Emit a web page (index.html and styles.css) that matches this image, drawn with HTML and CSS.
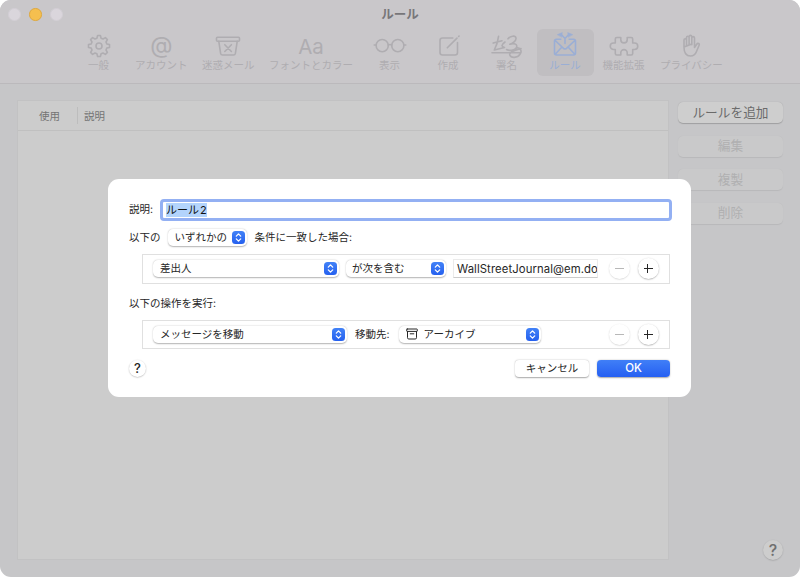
FILE: index.html
```html
<!DOCTYPE html>
<html lang="ja">
<head>
    <meta charset="UTF-8">
    <meta name="viewport" content="width=device-width, initial-scale=1.0">
    <title>ルール</title>
    <link rel="stylesheet" href="styles.css">
</head>
<body>
    <!-- 矢印アイコン (ポップアップ共通) -->
    <svg class="defs">
        <symbol id="arrows" viewBox="0 0 13 13">
            <path d="M4.3 5.1 6.5 2.9 8.7 5.1M4.3 7.9 6.5 10.1 8.7 7.9"/>
        </symbol>
    </svg>

    <div class="window">
        <div class="toolbar">
            <div class="titlebar">
                <div class="lights">
                    <span class="light"></span>
                    <span class="light yellow"></span>
                    <span class="light"></span>
                </div>
                <div class="title">ルール</div>
            </div>
            <div class="tabs">
                <div class="tab">
                    <svg width="24" height="24" viewBox="0 0 24 24"><path d="M10.6 1.5h2.800l.7 2.700 1.900.8 2.400-1.400 2 2-1.400 2.400.8 1.900 2.700.7v2.800l-2.700.7-.8 1.900 1.400 2.400-2 2-2.400-1.400-1.900.8-.7 2.700h-2.800l-.7-2.700-1.900-.8-2.400 1.400-2-2 1.400-2.400-.8-1.900-2.700-.7v-2.800l2.700-.7.8-1.900-1.400-2.400 2-2L8 5l1.900-.8z"/><circle cx="12" cy="12" r="3"/></svg>
                    <span>一般</span>
                </div>
                <div class="tab">
                    <div class="glyph at">@</div>
                    <span>アカウント</span>
                </div>
                <div class="tab">
                    <svg width="26" height="24" viewBox="0 0 26 24"><rect x="1.5" y="3.2" width="23" height="4" rx="1"/><path d="M3.800 7.400 5.600 19.400Q5.900 21 7.500 21h11Q20.100 21 20.400 19.400L22.200 7.400M9.800 10.700l6.600 6.800M16.400 10.700l-6.600 6.800"/></svg>
                    <span>迷惑メール</span>
                </div>
                <div class="tab">
                    <div class="glyph aa">Aa</div>
                    <span>フォントとカラー</span>
                </div>
                <div class="tab">
                    <svg width="34" height="24" viewBox="0 0 34 24"><circle cx="9.2" cy="11.600" r="6.100"/><circle cx="24.800" cy="11.600" r="6.100"/><path d="M15.200 11Q17 9.900 18.800 11M3.200 11H1.200M30.800 11h2"/></svg>
                    <span>表示</span>
                </div>
                <div class="tab">
                    <svg width="24" height="24" viewBox="0 0 24 24"><path d="M16.800 4H6.500Q4 4 4 6.500V18.500Q4 21 6.500 21h12.500q2.500 0 2.500-2.500V8.500M11.300 13.800 21 4.100M22.700 2.400l.4-.4"/></svg>
                    <span>作成</span>
                </div>
                <div class="tab">
                    <svg width="34" height="24" viewBox="0 0 34 24"><path d="M8.600 2.200C8 7 6.400 12 4.300 16M3.200 9.100 12 6.700M4.300 16 14.500 13.500C11 12.500 11 11 15 8M18 4.800C20 2 25.500.8 26 4.200 26.300 7 22 9.700 19.800 10.300 24 8.600 28.400 10.300 26.200 14 24.500 17 19 16.800 16.500 15.500M26.200 14C30 13 32.500 17 30 20.300 27.500 24 21 24.500 19.800 21 19 18 23.500 16.500 31 14.500M2 18.800H31"/></svg>
                    <span>署名</span>
                </div>
                <div class="tab active">
                    <svg width="26" height="24" viewBox="0 0 26 24"><path d="M8.800 5.300H4.500Q2.500 5.300 2.500 7.300V19Q2.500 21 4.500 21h17Q23.500 21 23.500 19V7.300Q23.500 5.300 21.500 5.300H17.200M3.200 6.500 11.500 14.300Q13 15.600 14.500 14.300L22.800 6.500M3.200 20.300 9.700 13.200M22.800 20.300 16.300 13.200M13 9.500V4.500L9.500.8M13 4.500 16.500.8"/><path class="solid" d="M5.500.5 10.300-1.500 9.700 3zM20.500.5 15.700-1.500 16.300 3z"/></svg>
                    <span>ルール</span>
                </div>
                <div class="tab">
                    <svg width="32" height="24" viewBox="0 0 32 24"><path d="M7.300 9V5Q7.300 3.500 8.800 3.500h4v2.200a3.200 3.200 0 1 0 6.400 0V3.500h4Q24.700 3.500 24.700 5V9h1.800a3 3 0 1 1 0 6.500h-1.800V19.500Q24.700 21 23.200 21h-4v-2.200a3.200 3.200 0 1 0-6.400 0V21h-4Q7.300 21 7.300 19.500V15.500H5.500a3 3 0 1 1 0-6.500z"/></svg>
                    <span>機能拡張</span>
                </div>
                <div class="tab">
                    <svg width="22" height="24" viewBox="0 0 22 24"><path d="M4 13V6Q4 4.700 5.200 4.700T6.500 6V11.500M6.500 10.500V3.600Q6.500 2.300 7.800 2.300T9.100 3.600V10.800M9.100 10V2.700Q9.100 1.400 10.400 1.400T11.800 2.700V10.800M11.800 10V3.900Q11.800 2.600 13.100 2.600T14.500 3.900V13.500L16.700 10.200Q17.500 9 18.600 9.500T19.100 11.200L16.500 17.500Q14.800 22 10.500 22 4 22 4 13z"/></svg>
                    <span>プライバシー</span>
                </div>
            </div>
        </div>

        <div class="content">
            <div class="list">
                <div class="list-head">
                    <div class="col use">使用</div>
                    <div class="col">説明</div>
                </div>
            </div>
            <div class="side">
                <button class="side-btn">ルールを追加</button>
                <button class="side-btn off">編集</button>
                <button class="side-btn off">複製</button>
                <button class="side-btn off">削除</button>
                <button class="help big">?</button>
            </div>
        </div>
    </div>

    <div class="dialog">
        <div class="row name-row">
            <label>説明:</label>
            <div class="name-input"><span class="selected">ルール 2</span></div>
        </div>
        <div class="row match-row">
            <span>以下の</span>
            <div class="popup any"><span>いずれかの</span><svg class="arrows"><use href="#arrows"/></svg></div>
            <span>条件に一致した場合:</span>
        </div>
        <div class="group">
            <div class="popup from"><span>差出人</span><svg class="arrows"><use href="#arrows"/></svg></div>
            <div class="popup contains"><span>が次を含む</span><svg class="arrows"><use href="#arrows"/></svg></div>
            <div class="value">WallStreetJournal@em.do</div>
            <div class="round-btns">
                <button class="round minus"></button>
                <button class="round plus"></button>
            </div>
        </div>
        <div class="row action-row">以下の操作を実行:</div>
        <div class="group">
            <div class="popup move"><span>メッセージを移動</span><svg class="arrows"><use href="#arrows"/></svg></div>
            <span class="dest">移動先:</span>
            <div class="popup archive">
                <svg class="box" width="12" height="12" viewBox="0 0 12 12"><rect x=".7" y="1" width="10.600" height="2.400" rx=".5"/><path d="M1.500 3.500V9.700Q1.500 11 2.800 11H9.200Q10.500 11 10.500 9.700V3.500M4.200 5.800H7.800"/></svg>
                <span>アーカイブ</span><svg class="arrows"><use href="#arrows"/></svg>
            </div>
            <div class="round-btns">
                <button class="round minus"></button>
                <button class="round plus"></button>
            </div>
        </div>
        <div class="footer">
            <button class="help">?</button>
            <button class="btn cancel">キャンセル</button>
            <button class="btn ok">OK</button>
        </div>
    </div>
</body>
</html>
```
FILE: styles.css
```css
* {
    padding: 0;
    margin: 0;
    box-sizing: border-box;
}
body {
    width: 800px;
    height: 577px;
    overflow: hidden;
    background-color: #fff;
    font-family: Inter, "Noto Sans CJK JP", sans-serif;
    font-size: 10.5px;
    line-height: 16px;
    color: #262626;
    white-space: nowrap;
}
button {
    font-family: inherit;
    color: inherit;
    border: none;
}
svg {
    fill: none;
    stroke: currentColor;
    stroke-linecap: round;
    stroke-linejoin: round;
    flex: none;
}
.defs {
    display: none;
}

/* 後ろのウィンドウ */
.window {
    width: 800px;
    height: 577px;
    border-radius: 11px;
    background-color: #c6c6c8;
    overflow: hidden;
    display: flex;
    flex-direction: column;
}
.toolbar {
    height: 84px;
    background-color: #c9c7ca;
    border-bottom: 1px solid #bbb9bc;
}
.titlebar {
    height: 29px;
    display: grid;
    grid-template-columns: 100px 1fr 100px;
    align-items: center;
}
.lights {
    display: flex;
    gap: 8.5px;
    padding-left: 8px;
}
.light {
    width: 12.5px;
    height: 12.5px;
    border-radius: 50%;
    background-color: #dad6dc;
    border: 1px solid #d2ced4;
}
.light.yellow {
    background-color: #f5bf4f;
    border-color: #dea83f;
}
.title {
    text-align: center;
    font-size: 12.5px;
    font-weight: 700;
    color: #777679;
}
.tabs {
    display: flex;
    gap: 1.5px;
    padding-left: 70px;
}
.tab {
    min-width: 57px;
    height: 47px;
    padding: 5px 6.5px 0;
    border-radius: 6px;
    display: flex;
    flex-direction: column;
    align-items: center;
    color: #afadb1;
}
.tab svg {
    height: 24px;
    stroke-width: 1.6;
    overflow: visible;
}
.tab > span {
    line-height: 16px;
}
.tab.active {
    background-color: #c0bec1;
    color: #9aaed5;
}
.tab .solid {
    fill: currentColor;
    stroke-width: .5;
}
.glyph {
    height: 24px;
    line-height: 22px;
}
.at {
    font-size: 23px;
}
.aa {
    font-size: 20.5px;
    line-height: 25px;
}

.content {
    flex: 1;
    display: flex;
    gap: 9px;
    padding: 16px 17px 17px;
}
.list {
    width: 652px;
    background-color: #ccc;
    border: 1px solid #c2c2c3;
}
.list-head {
    height: 30px;
    display: flex;
    align-items: center;
    border-bottom: 1px solid #c0c0c0;
    color: #747474;
}
.col {
    height: 17px;
    line-height: 19px;
    padding-left: 6px;
}
.col.use {
    width: 60px;
    padding-left: 21px;
    border-right: 1px solid #bdbdbd;
}
.side {
    width: 105px;
    padding-top: 2px;
    display: flex;
    flex-direction: column;
    gap: 12.5px;
}
.side-btn {
    height: 21px;
    line-height: 20px;
    font-size: 12.7px;
    color: #6a6a6a;
    background-color: #cecece;
    border-radius: 5px;
    box-shadow: 0 .5px 1px rgba(0, 0, 0, .2);
}
.side-btn.off {
    background-color: #c9c9ca;
    color: #b0b0b1;
    box-shadow: 0 .5px 1px rgba(0, 0, 0, .07);
}
.help {
    width: 17px;
    height: 17px;
    line-height: 17px;
    border-radius: 50%;
    background-color: #fff;
    font-size: 13px;
    font-weight: 500;
    box-shadow: 0 .5px 1.5px rgba(0, 0, 0, .3);
}
.help.big {
    width: 20px;
    height: 20px;
    line-height: 20px;
    font-size: 16px;
    margin: auto 0 0 85px;
    color: #707070;
    background-color: #cdcdcd;
    box-shadow: 0 .5px 1.5px rgba(0, 0, 0, .2);
}

/* ルール編集シート */
.dialog {
    position: absolute;
    top: 179px;
    left: 108px;
    width: 583px;
    height: 218px;
    padding: 20px 21px 0 20px;
    border-radius: 11px;
    background-color: #fff;
}
.row {
    display: flex;
    align-items: center;
}
.name-row {
    height: 22px;
    gap: 7px;
    margin-right: -2px;
    padding-left: 1px;
}
.name-input {
    flex: 1;
    height: 22px;
    padding: 0 3px;
    border: 3px solid #93b0f3;
    border-radius: 4px;
    display: flex;
    align-items: center;
    color: #111;
}
.selected {
    height: 14px;
    line-height: 15px;
    font-size: 11px;
    word-spacing: -2px;
    background-color: #b3d4fc;
}
.match-row {
    height: 17px;
    margin-top: 8px;
    padding-left: 1px;
    gap: 8px;
}
.popup {
    height: 17px;
    padding: 0 2px 0 7px;
    border-radius: 5px;
    background-color: #fff;
    box-shadow: 0 .5px 1.5px rgba(0, 0, 0, .3);
    display: flex;
    align-items: center;
}
.arrows {
    width: 13px;
    height: 13px;
    margin-left: auto;
    border-radius: 3.5px;
    background: linear-gradient(#4282f7, #2560ef);
    color: #fff;
    stroke-width: 1.3;
}
.any {
    width: 79px;
    margin-left: -1px;
}
.group {
    height: 29.5px;
    margin: 8px 0 0 14px;
    padding: 0 10.5px 0 10px;
    border: 1px solid #e0e0e0;
    display: flex;
    align-items: center;
}
.group span {
    line-height: 18px;
    padding-top: 1px;
}
.from {
    width: 186px;
}
.contains {
    width: 100px;
    margin-left: 7px;
    padding-left: 6px;
}
.value {
    width: 145px;
    height: 19px;
    line-height: 19px;
    margin-left: 7px;
    padding-left: 3px;
    border: 1px solid #ebebeb;
    border-bottom: 1.5px solid #ccc;
    overflow: hidden;
    font-size: 11.3px;
    letter-spacing: .1px;
}
.round-btns {
    margin-left: auto;
    display: flex;
    gap: 8px;
}
.round {
    width: 21px;
    height: 21px;
    border-radius: 50%;
    box-shadow: 0 .5px 1.5px rgba(0, 0, 0, .35);
}
.round.plus {
    background: linear-gradient(currentColor, currentColor) center / 9px 1.2px no-repeat,
        linear-gradient(currentColor, currentColor) center / 1.2px 9px no-repeat;
}
.round.minus {
    color: #b8b8b8;
    background: linear-gradient(currentColor, currentColor) center / 9px 1.2px no-repeat;
    box-shadow: 0 .5px 1.5px rgba(0, 0, 0, .18);
}
.action-row {
    height: 16px;
    margin-top: 12px;
    padding-left: 1px;
}
.move {
    width: 194px;
}
.dest {
    margin: 0 9px 0 8px;
}
.archive {
    width: 142px;
}
.box {
    margin-right: 6px;
    stroke-width: 1;
}
.footer {
    display: flex;
    align-items: center;
    margin-top: 11px;
    padding-left: 1px;
}
.btn {
    height: 17px;
    line-height: 15px;
    border-radius: 4px;
    font-size: 10.5px;
    background-color: #fff;
    box-shadow: 0 .5px 1.5px rgba(0, 0, 0, .35);
}
.cancel {
    width: 74px;
    margin-left: auto;
}
.ok {
    width: 73px;
    margin-left: 8px;
    color: #fff;
    font-size: 11.5px;
    font-weight: 500;
    background: linear-gradient(#407ff7, #255ff2);
}
```
